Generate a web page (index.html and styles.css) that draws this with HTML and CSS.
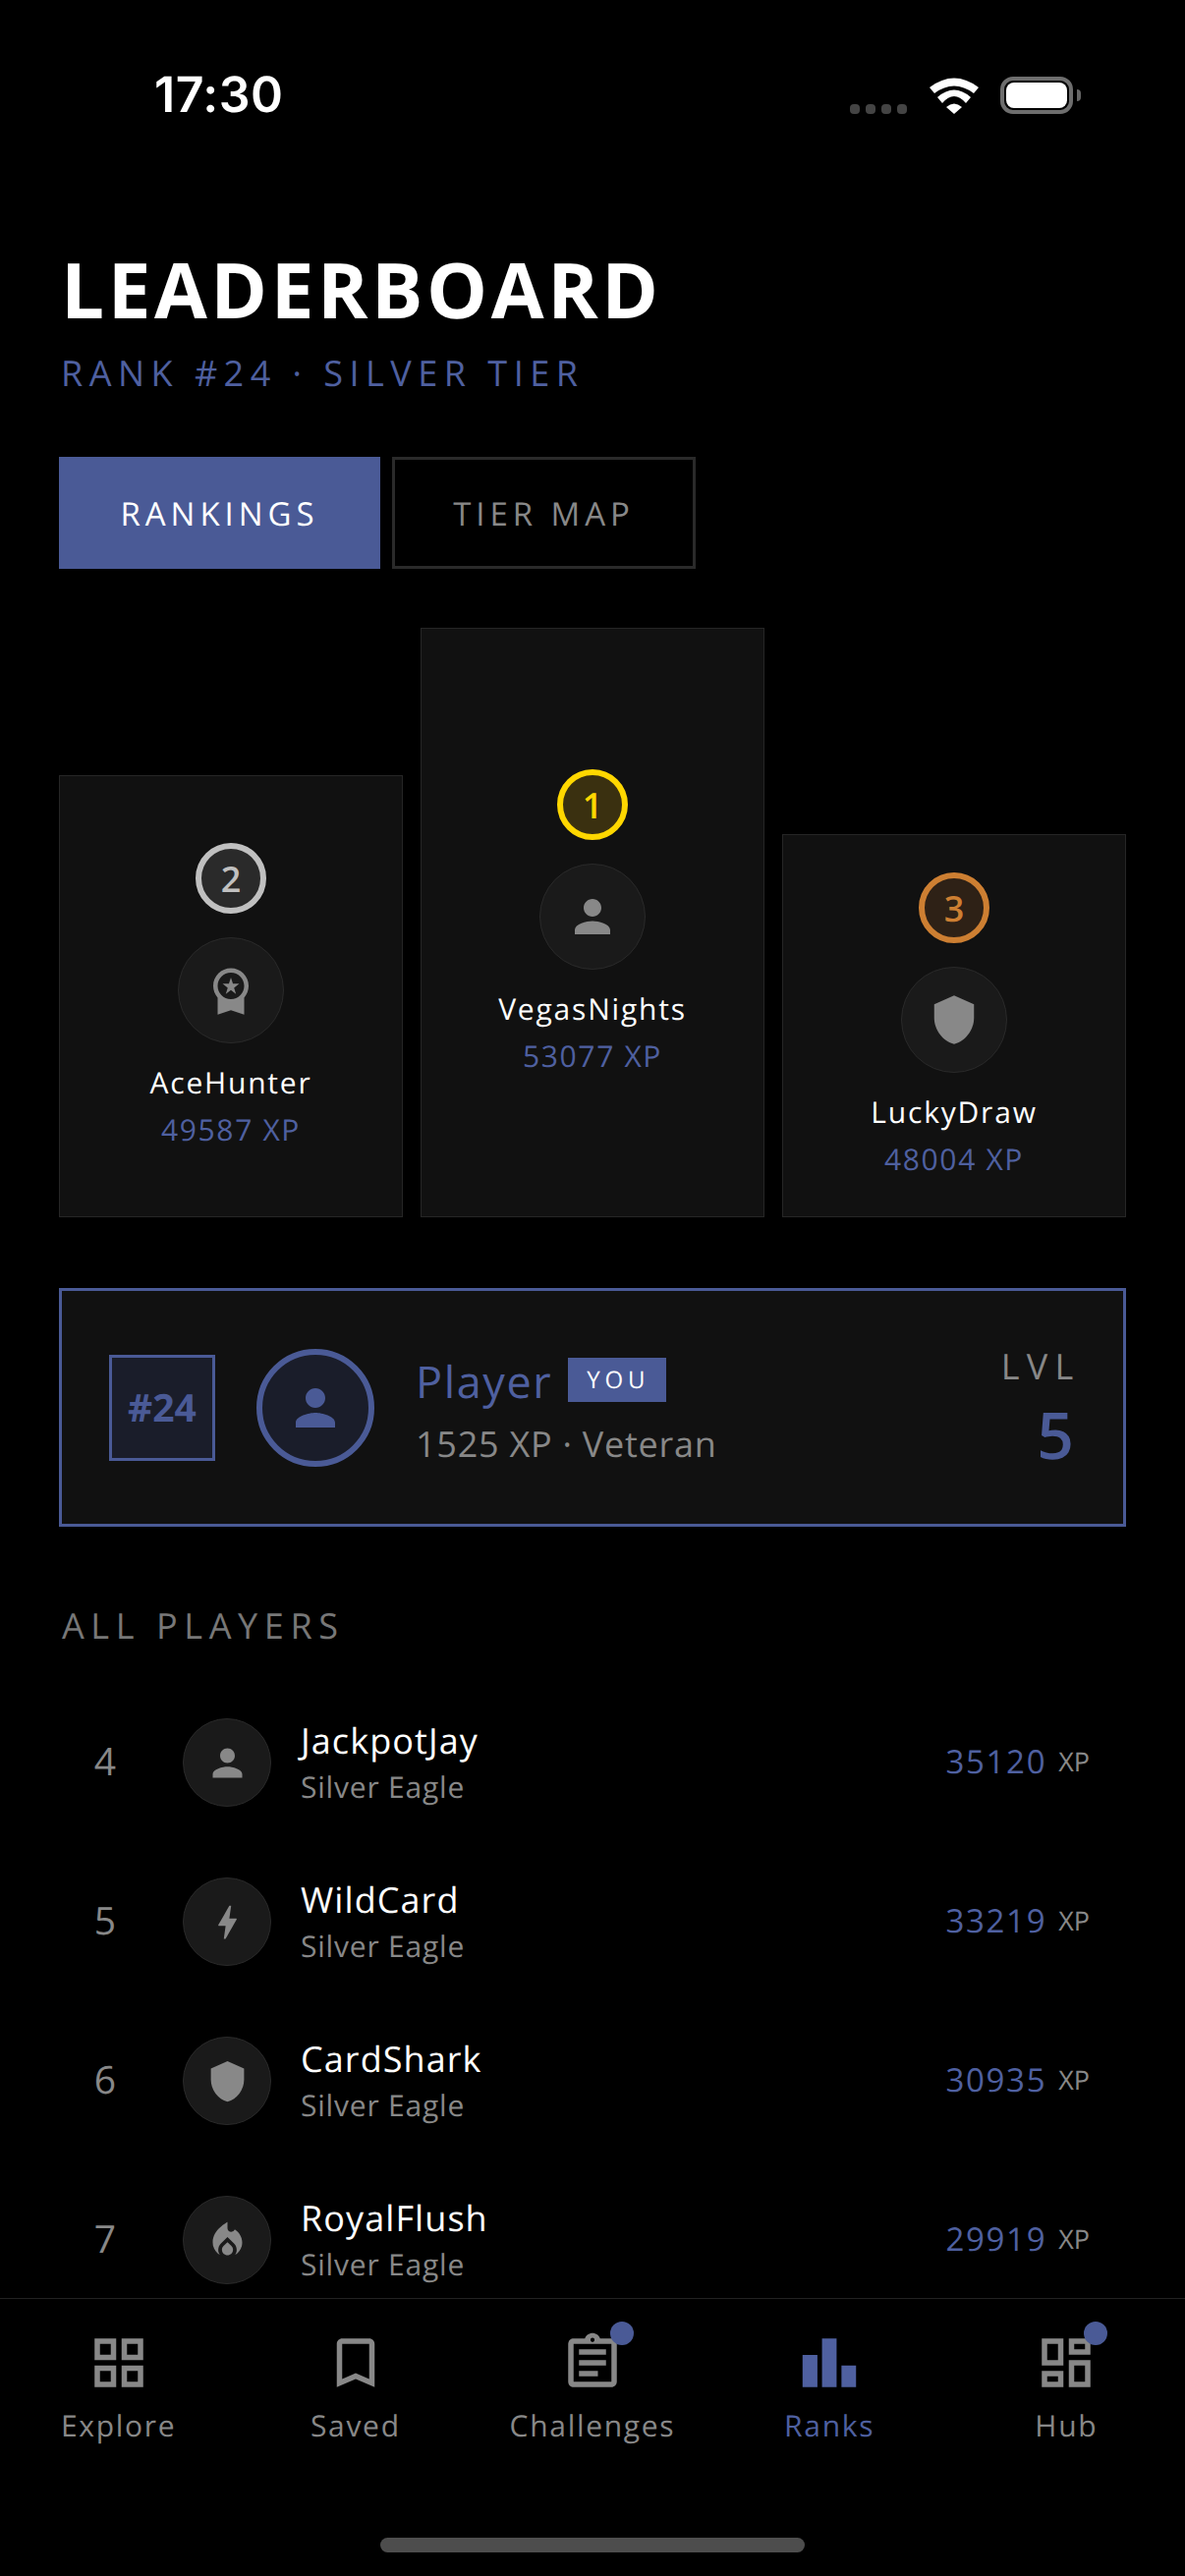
FILE: index.html
```html
<!DOCTYPE html>
<html lang="en">
<head>
<meta charset="utf-8">
<title>Leaderboard</title>
<link rel="stylesheet" href="styles.css">
</head>
<body>
<svg class="sprite" aria-hidden="true">
  <symbol id="i-person" viewBox="0 0 24 24"><path d="M12 12c2.21 0 4-1.79 4-4s-1.79-4-4-4-4 1.79-4 4 1.79 4 4 4zm0 2c-2.67 0-8 1.34-8 4v2h16v-2c0-2.66-5.33-4-8-4z"/></symbol>
  <symbol id="i-medal" viewBox="0 0 24 24"><path d="M9.68 13.69 12 11.93l2.31 1.76-.88-2.85L15.75 9h-2.84L12 6.19 11.09 9H8.25l2.31 1.84-.88 2.85zM20 10c0-4.42-3.58-8-8-8s-8 3.58-8 8c0 2.03.76 3.87 2 5.28V23l6-2 6 2v-7.72c1.24-1.41 2-3.25 2-5.28zm-8-6c3.31 0 6 2.69 6 6s-2.69 6-6 6-6-2.69-6-6 2.69-6 6-6z"/></symbol>
  <symbol id="i-shield" viewBox="0 0 24 24"><path d="M12 1 3 5v6c0 5.55 3.84 10.74 9 12 5.16-1.26 9-6.45 9-12V5l-9-4z"/></symbol>
  <symbol id="i-bolt" viewBox="0 0 24 24"><path d="M11 21h-1l1-7H7.5c-.58 0-.57-.32-.38-.66.19-.34.05-.08.07-.12C8.48 10.94 10.42 7.54 13 3h1l-1 7h3.5c.49 0 .56.33.47.51l-.07.15C12.96 17.55 11 21 11 21z"/></symbol>
  <symbol id="i-fire" viewBox="0 0 24 24"><path d="M12 12.9l-2.13 2.09C9.31 15.55 9 16.28 9 17.06 9 18.68 10.35 20 12 20s3-1.32 3-2.94c0-.78-.31-1.52-.87-2.07L12 12.9z"/><path d="M16 6l-.44.55C14.38 8.02 12 7.19 12 5.3V2S4 6 4 13c0 2.92 1.56 5.47 3.89 6.86-.56-.79-.89-1.76-.89-2.8 0-1.32.52-2.56 1.47-3.5L12 10.1l3.53 3.47c.95.93 1.47 2.17 1.47 3.5 0 1.02-.31 1.96-.85 2.75 1.89-1.15 3.29-3.06 3.71-5.3.66-3.46-1.08-6.65-3.86-8.52z"/></symbol>
</svg>

<div class="app">
  <div class="status">
    <span class="time">17:30</span>
    <div class="status-icons">
      <div class="signal"><i></i><i></i><i></i><i></i></div>
      <svg class="wifi" viewBox="0 0 50 37"><path d="M0 10Q25-9 50 10L45 16Q25 1 5 16Z"/><path d="M8 20Q25 5 42 20L37 26Q25 12 13 26Z"/><path d="M17 30Q25 23 33 30L25 37Z"/></svg>
      <div class="battery"><div class="battery-fill"></div></div>
      <div class="battery-nub"></div>
    </div>
  </div>

  <main class="main">
    <h1 class="title">LEADERBOARD</h1>
    <p class="subtitle">RANK #24 · SILVER TIER</p>

    <div class="tabs">
      <div class="tab tab-on">RANKINGS</div>
      <div class="tab tab-off">TIER MAP</div>
    </div>

    <div class="podium">
      <div class="pod pod-2">
        <div class="badge badge-2">2</div>
        <div class="pod-av"><svg class="ic-54"><use href="#i-medal"/></svg></div>
        <div class="pod-name">AceHunter</div>
        <div class="pod-xp">49587 XP</div>
      </div>
      <div class="pod pod-1">
        <div class="badge badge-1">1</div>
        <div class="pod-av"><svg class="ic-54"><use href="#i-person"/></svg></div>
        <div class="pod-name">VegasNights</div>
        <div class="pod-xp">53077 XP</div>
      </div>
      <div class="pod pod-3">
        <div class="badge badge-3">3</div>
        <div class="pod-av"><svg class="ic-54"><use href="#i-shield"/></svg></div>
        <div class="pod-name">LuckyDraw</div>
        <div class="pod-xp">48004 XP</div>
      </div>
    </div>

    <div class="me">
      <div class="me-rank">#24</div>
      <div class="me-av"><svg class="ic-60"><use href="#i-person"/></svg></div>
      <div class="me-info">
        <div class="me-top"><span class="me-name">Player</span><span class="me-you">YOU</span></div>
        <div class="me-sub">1525 XP · Veteran</div>
      </div>
      <div class="me-lvl">
        <div class="lvl-label">LVL</div>
        <div class="lvl-num">5</div>
      </div>
    </div>

    <div class="all-label">ALL PLAYERS</div>

    <div class="row">
      <div class="row-rank">4</div>
      <div class="row-av"><svg class="ic-45"><use href="#i-person"/></svg></div>
      <div class="row-info"><div class="row-name">JackpotJay</div><div class="row-sub">Silver Eagle</div></div>
      <div class="row-xp">35120</div><div class="row-unit">XP</div>
    </div>
    <div class="row">
      <div class="row-rank">5</div>
      <div class="row-av"><svg class="ic-45"><use href="#i-bolt"/></svg></div>
      <div class="row-info"><div class="row-name">WildCard</div><div class="row-sub">Silver Eagle</div></div>
      <div class="row-xp">33219</div><div class="row-unit">XP</div>
    </div>
    <div class="row">
      <div class="row-rank">6</div>
      <div class="row-av"><svg class="ic-45"><use href="#i-shield"/></svg></div>
      <div class="row-info"><div class="row-name">CardShark</div><div class="row-sub">Silver Eagle</div></div>
      <div class="row-xp">30935</div><div class="row-unit">XP</div>
    </div>
    <div class="row">
      <div class="row-rank">7</div>
      <div class="row-av"><svg class="ic-45"><use href="#i-fire"/></svg></div>
      <div class="row-info"><div class="row-name">RoyalFlush</div><div class="row-sub">Silver Eagle</div></div>
      <div class="row-xp">29919</div><div class="row-unit">XP</div>
    </div>
  </main>

  <nav class="nav">
    <div class="nav-item">
      <div class="nav-ic"><svg class="ic-66" viewBox="0 0 24 24"><path d="M3 3v8h8V3H3zm6 6H5V5h4v4zm-6 4v8h8v-8H3zm6 6H5v-4h4v4zm4-16v8h8V3h-8zm6 6h-4V5h4v4zm-6 4v8h8v-8h-8zm6 6h-4v-4h4v4z"/></svg></div>
      <span class="nav-label">Explore</span>
    </div>
    <div class="nav-item">
      <div class="nav-ic"><svg class="ic-66" viewBox="0 0 24 24"><path d="M17 3H7c-1.1 0-2 .9-2 2v16l7-3 7 3V5c0-1.1-.9-2-2-2zm0 15l-5-2.18L7 18V5h10v13z"/></svg></div>
      <span class="nav-label">Saved</span>
    </div>
    <div class="nav-item">
      <div class="nav-ic"><svg class="ic-66" viewBox="0 0 24 24"><path d="M7 15h7v2H7zm0-4h10v2H7zm0-4h10v2H7zm12-4h-4.18C14.4 1.84 13.3 1 12 1c-1.3 0-2.4.84-2.82 2H5c-.14 0-.27.01-.4.04-.39.08-.74.28-1.01.55-.18.18-.33.4-.43.64-.1.23-.16.49-.16.77v14c0 .27.06.54.16.78s.25.45.43.64c.27.27.62.47 1.01.55.13.02.26.03.4.03h14c1.1 0 2-.9 2-2V5c0-1.1-.9-2-2-2zm-7-.25c.41 0 .75.34.75.75s-.34.75-.75.75-.75-.34-.75-.75.34-.75.75-.75zM19 19H5V5h14v14z"/></svg><span class="nav-dot"></span></div>
      <span class="nav-label">Challenges</span>
    </div>
    <div class="nav-item nav-on">
      <div class="nav-ic"><svg class="ic-66" viewBox="0 0 24 24"><path d="M2.1 9.1h5.5V21H2.1zM9.3 3h5.4v18H9.3zM16.5 13h5.4v8h-5.4z"/></svg></div>
      <span class="nav-label">Ranks</span>
    </div>
    <div class="nav-item">
      <div class="nav-ic"><svg class="ic-66" viewBox="0 0 24 24"><path d="M19 5v2h-4V5h4M9 5v6H5V5h4m10 8v6h-4v-6h4M9 17v2H5v-2h4M21 3h-8v6h8V3zM11 3H3v10h8V3zm10 8h-8v10h8V11zm-10 4H3v6h8v-6z"/></svg><span class="nav-dot"></span></div>
      <span class="nav-label">Hub</span>
    </div>
    <div class="home-bar"></div>
  </nav>
</div>
</body>
</html>
```

FILE: styles.css
```css
* { box-sizing: border-box; margin: 0; padding: 0; }
html, body { background: #000; }
body { width: 1206px; height: 2622px; overflow: hidden; font-family: "Open Sans", sans-serif; color: #fff; text-rendering: geometricPrecision; }
.sprite { width: 0; height: 0; position: absolute; }
svg { fill: currentColor; display: block; }
.ic-45 { width: 45px; height: 45px; }
.ic-54 { width: 54px; height: 54px; }
.ic-60 { width: 60px; height: 60px; }
.ic-66 { width: 66px; height: 66px; }

.app { width: 1206px; height: 2622px; display: flex; flex-direction: column; }

/* status bar */
.status { height: 132px; flex: none; display: flex; justify-content: space-between; padding: 67px 106px 0 157px; }
.time { font-family: Inter, sans-serif; font-weight: 600; font-size: 50px; line-height: 60px; height: 60px; letter-spacing: .5px; }
.status-icons { display: flex; align-items: flex-end; height: 49px; }
.signal { display: flex; gap: 6px; margin-right: 23px; }
.signal i { width: 10px; height: 10px; border-radius: 4px; background: #444; display: block; }
.wifi { width: 50px; height: 37px; margin-right: 22px; }
.battery { width: 74px; height: 38px; border: 4px solid #6e6e6e; border-radius: 13px; padding: 2px; }
.battery-fill { width: 100%; height: 100%; background: #fff; border-radius: 8px; }
.battery-nub { width: 4px; height: 12px; background: #666; border-radius: 0 6px 6px 0; margin: 0 0 13px 4px; }

/* main */
.main { flex: 1; min-height: 0; overflow: hidden; padding: 0 60px; }
.title { font-size: 78px; line-height: 106px; font-weight: 700; letter-spacing: 3.6px; padding-top: 109px; box-sizing: content-box; margin-left: 2px; }
.subtitle { font-size: 36px; line-height: 49px; color: #4f60a0; letter-spacing: 6.48px; margin-top: 8px; margin-left: 2px; }

.tabs { display: flex; gap: 12px; margin-top: 61px; }
.tab { height: 114px; border: 3px solid #2a2a2a; display: flex; align-items: center; justify-content: center; font-size: 33px; letter-spacing: 4.95px; color: #888; }
.tab-on { width: 327px; background: #4a5a96; border-color: #4a5a96; color: #fff; }
.tab-off { width: 309px; }

.podium { display: flex; align-items: flex-end; gap: 18px; margin-top: 60px; }
.pod { flex: 1; background: #111; border: 1px solid #262626; display: flex; flex-direction: column; align-items: center; justify-content: center; }
.pod-1 { height: 600px; }
.pod-2 { height: 450px; }
.pod-3 { height: 390px; }
.badge { width: 72px; height: 72px; border-radius: 50%; border: 6px solid; display: flex; align-items: center; justify-content: center; font-size: 36px; font-weight: 600; margin-bottom: 24px; }
.badge-1 { border-color: #ffd700; background: #3a3010; color: #ffd700; }
.badge-2 { border-color: #c0c0c0; background: #2a2a2a; color: #c0c0c0; }
.badge-3 { border-color: #cd7f32; background: #2e2116; color: #cd7f32; }
.pod-av { width: 108px; height: 108px; border-radius: 50%; background: #1a1a1a; border: 1px solid #2a2a2a; color: #888; display: flex; align-items: center; justify-content: center; }
.pod-name { font-size: 30px; line-height: 41px; letter-spacing: 1.8px; margin-top: 19px; }
.pod-xp { font-size: 30px; line-height: 41px; letter-spacing: 1.65px; color: #4f60a0; margin-top: 7px; }

.me { margin-top: 72px; height: 243px; background: #111; border: 3px solid #4a5a96; display: flex; align-items: center; padding: 0 48px; }
.me-rank { width: 108px; height: 108px; border: 3px solid #4a5a96; background: #1a1d2a; color: #4a5a96; display: flex; align-items: center; justify-content: center; font-size: 39px; font-weight: 700; flex: none; }
.me-av { width: 120px; height: 120px; border-radius: 50%; border: 6px solid #4a5a96; background: #1a1d2a; color: #4a5a96; display: flex; align-items: center; justify-content: center; margin-left: 42px; flex: none; }
.me-info { flex: 1; margin-left: 42px; }
.me-top { display: flex; align-items: center; gap: 16px; }
.me-name { font-size: 45px; line-height: 61px; padding-top: 5px; letter-spacing: 1.6px; color: #4f60a0; }
.me-you { width: 100px; height: 45px; padding-left: 2px; background: #4a5a96; color: #fff; font-size: 24px; letter-spacing: 4.8px; display: flex; align-items: center; justify-content: center; }
.me-sub { font-size: 36px; line-height: 49px; letter-spacing: .75px; color: #888; margin-top: 8px; }
.me-lvl { display: flex; flex-direction: column; align-items: flex-end; margin-top: 5px; }
.lvl-label { font-size: 36px; line-height: 49px; letter-spacing: 7.2px; color: #888; margin-right: -4.5px; }
.lvl-num { font-size: 66px; line-height: 90px; font-weight: 600; color: #4a5a96; margin-right: 2px; }

.all-label { margin-top: 76px; margin-left: 3px; font-size: 36px; line-height: 49px; letter-spacing: 6.6px; color: #777; }
.row { height: 162px; display: flex; align-items: center; padding-right: 37px; }
.all-label + .row { margin-top: 34px; }
.row-rank { width: 94px; text-align: center; font-size: 39px; color: #888; flex: none; margin-top: -3px; }
.row-av { width: 90px; height: 90px; border-radius: 50%; background: #1a1a1a; border: 1px solid #2a2a2a; color: #888; display: flex; align-items: center; justify-content: center; margin-left: 32px; flex: none; }
.row-info { flex: 1; margin-left: 30px; margin-top: -1px; }
.row-name { font-size: 36px; line-height: 49px; letter-spacing: 1.08px; margin-top: -1px; }
.row-sub { font-size: 30px; line-height: 41px; letter-spacing: .8px; color: #888; margin-top: 2px; }
.row-xp { font-size: 33px; letter-spacing: 1.65px; color: #4f60a0; margin-top: -3px; }
.row-unit { font-size: 27px; color: #888; margin-left: 12px; margin-top: -3px; }

/* nav */
.nav { flex: none; height: 283px; border-top: 1px solid #222; display: flex; align-items: flex-start; position: relative; background: #000; }
.nav-item { width: 20%; display: flex; flex-direction: column; align-items: center; color: #888; padding-top: 32px; }
.nav-on { color: #4f60a0; }
.nav-ic { position: relative; width: 66px; height: 66px; }
.nav-dot { position: absolute; top: -9px; right: -9px; width: 24px; height: 24px; border-radius: 50%; background: #4a5a96; }
.nav-label { font-size: 30px; line-height: 41px; letter-spacing: 1.7px; margin-top: 10px; }
.home-bar { position: absolute; left: 387px; bottom: 24px; width: 432px; height: 15px; border-radius: 9px; background: #4d4d4d; }
```
